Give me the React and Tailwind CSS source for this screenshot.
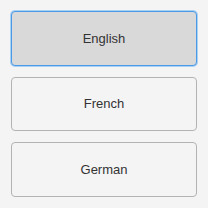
import { useState } from "react";

const LANGS = ["English", "French", "German"];

export default function App() {
  const [sel, setSel] = useState("English");

  return (
    <div className="flex h-screen w-screen flex-col gap-[11px] bg-[#f4f4f4] p-[11px] font-['Liberation_Sans',Arial,sans-serif]">
      {LANGS.map((l) => (
        <button
          key={l}
          onClick={() => setSel(l)}
          className={
            "flex flex-1 items-center justify-center rounded-[4px] border text-[13px] text-[#333] " +
            (sel === l
              ? "border-[#4a9ae6] bg-[#d9d9d9] shadow-[0_0_0_1px_#a9d0f5]"
              : "border-[#b3b3b3] bg-[#f4f4f4]")
          }
        >
          {l}
        </button>
      ))}
    </div>
  );
}
